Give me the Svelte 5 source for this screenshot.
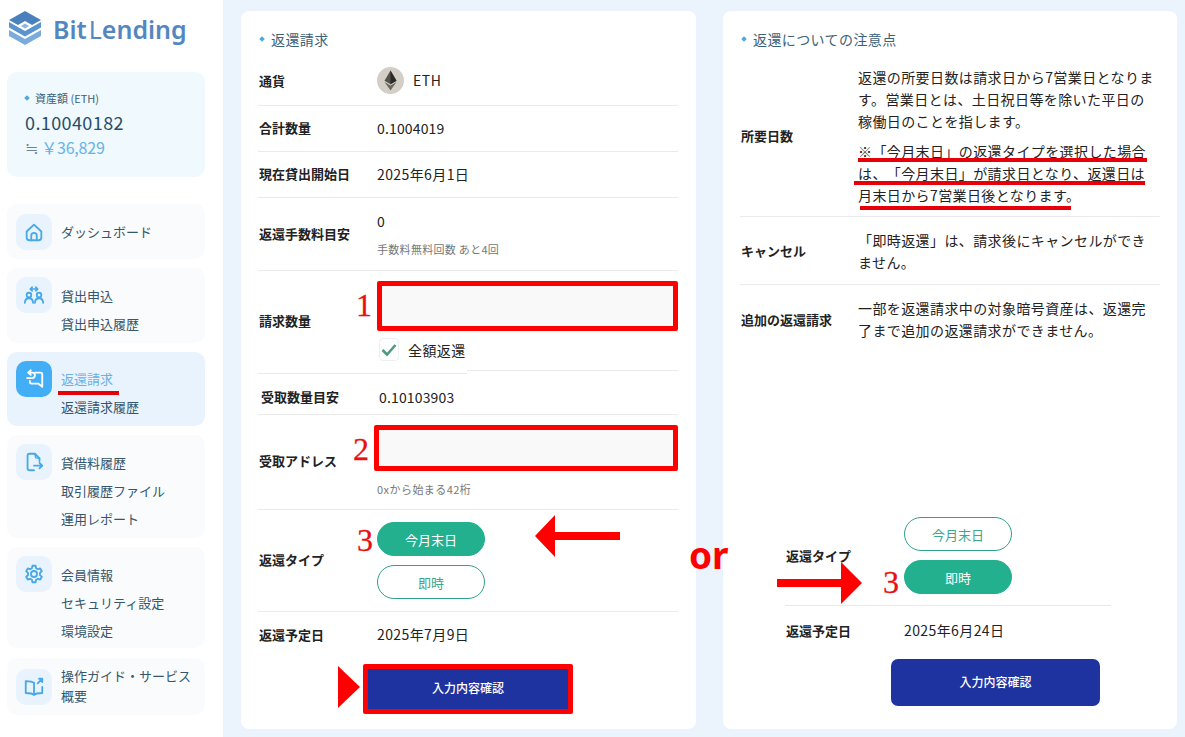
<script>
  const groups = [
    { icon: 'home', links: ['ダッシュボード'], cls: 'g1' },
    { icon: 'people', links: ['貸出申込', '貸出申込履歴'], cls: 'g2' },
    { icon: 'swap', links: ['返還請求', '返還請求履歴'], cls: 'g2b', active: true },
    { icon: 'file', links: ['貸借料履歴', '取引履歴ファイル', '運用レポート'], cls: 'g3' },
    { icon: 'gear', links: ['会員情報', 'セキュリティ設定', '環境設定'], cls: 'g3b' },
    { icon: 'book', links: ['操作ガイド・サービス概要'], cls: 'g4' }
  ];
</script>

{#snippet navIcon(name)}
  <svg viewBox="0 0 24 24" width="22" height="22" fill="none" stroke="currentColor" stroke-width="2" stroke-linecap="round" stroke-linejoin="round">
    {#if name === 'home'}
      <path d="M4 11.500 12 4l8 7.500V18a3 3 0 0 1-3 3H7a3 3 0 0 1-3-3z" />
      <path d="M9 21v-5a3 3 0 0 1 6 0v5" />
    {:else if name === 'people'}
      <circle cx="6.500" cy="12" r="2.500" />
      <circle cx="17.500" cy="12" r="2.500" />
      <path d="M2 20.500c.2-3 2-5 4.500-5s4.300 2 4.500 5M13 20.500c.2-3 2-5 4.500-5s4.300 2 4.500 5" />
      <path d="M8 5.500h8M10 3.500 8 5.500 10 7.500M14 3.500 16 5.500 14 7.500" stroke-width="1.800" />
    {:else if name === 'swap'}
      <path d="M13 5h6a2 2 0 0 1 2 2v13.500L16.500 17H9.500a2 2 0 0 1-2-2v-1" />
      <path d="M6 5h4a3 3 0 0 1 0 6H4.500M8.500 2.500 5.500 5l3 2.500" />
    {:else if name === 'file'}
      <path d="M12 21H7a2 2 0 0 1-2-2V5a2 2 0 0 1 2-2h6l5 5v3" />
      <path d="M13 3.500 14 7.500l4 .5" stroke-width="1.600" />
      <path d="M12 16h9M18 13l3 3-3 3" />
    {:else if name === 'gear'}
      <circle cx="12" cy="12" r="3.300" />
      <path d="M10.300 3h3.400l.6 2.700 1.900 1.100 2.600-.8 1.700 3-2 1.800v2.400l2 1.800-1.700 3-2.600-.8-1.900 1.100-.6 2.700h-3.400l-.6-2.700-1.900-1.100-2.600.8-1.700-3 2-1.800v-2.400l-2-1.800 1.700-3 2.600.8 1.900-1.100z" />
    {:else}
      <path d="M12 7.500C10.500 6 8 5.500 3 5.500v13c5 0 7.500.5 9 2 1.500-1.500 4-2 9-2V12" />
      <path d="M12 7.500v13" />
      <path d="M16 8l5-5M17.500 3H21v3.500" />
    {/if}
  </svg>
{/snippet}

<div class="page">
  <aside class="sidebar">
    <div class="logo">
      <svg width="34" height="34" viewBox="0 0 34 34">
        <path d="M17 0 33 9l-9 5-7-4-7 4-9-5z" fill="#4a80bd" />
        <path d="M1 11l16 9 16-9v5.500L17 25.500 1 16.500z" fill="#5b93cf" />
        <path d="M1 19l16 9 16-9v6L17 34 1 25z" fill="#79abdd" />
        <path d="M17 12.500l4 2.500-4 2.500-4-2.500z" fill="#8ab8e3" />
      </svg>
      <span class="brand">Bit<b>L</b>ending</span>
    </div>

    <div class="balance">
      <div class="bal-label"><i class="dot"></i>資産額 (ETH)</div>
      <div class="bal-value">0.10040182</div>
      <div class="bal-yen"><span>≒</span> ￥36,829</div>
    </div>

    <nav>
      {#each groups as g}
        <div class="group {g.cls}" class:active={g.active}>
          <div class="icon">{@render navIcon(g.icon)}</div>
          <div class="links">
            {#each g.links as l, i}
              <a class:cur={g.active && i === 0}>{l}</a>
            {/each}
          </div>
        </div>
      {/each}
    </nav>
  </aside>

  <main>
    <section class="card left">
      <h2><i class="dot"></i>返還請求</h2>
      <div class="row h49">
        <div class="lab">通貨</div>
        <div class="val coin">
          <svg width="27" height="27" viewBox="0 0 27 27">
            <circle cx="13.500" cy="13.500" r="13.500" fill="#d3cfc6" />
            <path d="M13.500 3.500 7.500 13.700l6 3.500 6-3.500z" fill="#55524e" />
            <path d="M13.500 3.500v13.700l6-3.500z" fill="#2c2a29" />
            <path d="M7.500 15l6 8.500 6-8.500-6 3.500z" fill="#6c6965" />
          </svg>
          ETH
        </div>
      </div>
      <div class="row h46"><div class="lab">合計数量</div><div class="val num-val">0.1004019</div></div>
      <div class="row h46"><div class="lab">現在貸出開始日</div><div class="val">2025年6月1日</div></div>
      <div class="row h73">
        <div class="lab">返還手数料目安</div>
        <div class="val stack"><span>0</span><small>手数料無料回数 あと4回</small></div>
      </div>
      <div class="row h100 top">
        <div class="lab mid">請求数量</div>
        <div class="val">
          <div class="input one"></div>
          <label class="check">
            <span class="box">
              <svg width="16" height="14" viewBox="0 0 16 14"><path d="M1.500 7 6 11.500 14.500 2" fill="none" stroke="#4f9c7d" stroke-width="2.600" /></svg>
            </span>
            全額返還
          </label>
        </div>
      </div>
      <div class="row h44 shifted"><div class="lab">受取数量目安</div><div class="val num-val">0.10103903</div></div>
      <div class="row h95 top">
        <div class="lab mid2">受取アドレス</div>
        <div class="val">
          <div class="input two"></div>
          <small class="hint">0xから始まる42桁</small>
        </div>
      </div>
      <div class="row h102">
        <div class="lab">返還タイプ</div>
        <div class="val pills">
          <button class="pill on">今月末日</button>
          <button class="pill">即時</button>
        </div>
      </div>
      <div class="row plain h50"><div class="lab">返還予定日</div><div class="val">2025年7月9日</div></div>
      <button class="confirm marked">入力内容確認</button>
    </section>

    <section class="card right">
      <h2><i class="dot"></i>返還についての注意点</h2>
      <div class="row r1">
        <div class="lab">所要日数</div>
        <div class="val para">
          <p>返還の所要日数は請求日から7営業日となります。営業日とは、土日祝日等を除いた平日の稼働日のことを指します。</p>
          <p class="second">※「今月末日」の返還タイプを選択した場合は、「今月末日」が請求日となり、返還日は月末日から7営業日後となります。</p>
        </div>
      </div>
      <div class="row r2">
        <div class="lab">キャンセル</div>
        <div class="val para"><p>「即時返還」は、請求後にキャンセルができません。</p></div>
      </div>
      <div class="row r3 plain">
        <div class="lab">追加の返還請求</div>
        <div class="val para"><p>一部を返還請求中の対象暗号資産は、返還完了まで追加の返還請求ができません。</p></div>
      </div>

      <div class="alt">
        <div class="row alt-type">
          <div class="lab">返還タイプ</div>
          <div class="val pills">
            <button class="pill">今月末日</button>
            <button class="pill on">即時</button>
          </div>
        </div>
        <div class="row plain alt-date"><div class="lab">返還予定日</div><div class="val">2025年6月24日</div></div>
      </div>
      <button class="confirm alt-btn">入力内容確認</button>
    </section>
  </main>

  <!-- annotations and paste seams drawn over the screenshot -->
  <div class="marks">
    <i class="seam"></i>
    <span class="num" style="left:356px;top:287px">1</span>
    <span class="num" style="left:353px;top:431px">2</span>
    <span class="num" style="left:357px;top:522px">3</span>
    <span class="num" style="left:883px;top:564px">3</span>
    <span class="or">or</span>
    <i class="ul" style="left:58px;top:391px;width:61px"></i>
    <i class="ul" style="left:858px;top:158px;width:289px"></i>
    <i class="ul" style="left:854px;top:181px;width:291px"></i>
    <i class="ul" style="left:860px;top:206px;width:211px"></i>
    <svg class="arrows" width="1185" height="737" viewBox="0 0 1185 737">
      <path d="M620 532v8h-65v17l-20-21 20-21v17z" fill="#f00" />
      <path d="M777 579v8h64v17l21-21-21-21v17z" fill="#f00" />
      <path d="M338 666l22 21-22 21z" fill="#f00" />
    </svg>
  </div>
</div>

<style>
  :global(body) {
    margin: 0;
    font-family: "Noto Sans CJK JP", "Noto Sans", sans-serif;
    color: #222;
  }
  .page {
    position: relative;
    width: 1185px;
    height: 737px;
    display: flex;
    overflow: hidden;
    background: #ebf3fd;
  }
  .sidebar {
    width: 223px;
    flex: none;
    background: #fff;
    padding: 11px 18px 0 7px;
    box-sizing: border-box;
  }
  .logo {
    display: flex;
    align-items: flex-start;
    gap: 11px;
    height: 36px;
    padding-left: 1px;
  }
  .brand {
    font-family: "Noto Sans", sans-serif;
    font-size: 25px;
    font-weight: 600;
    color: #5487bf;
    line-height: 36px;
  }
  .brand b {
    font-weight: 400;
    margin-left: 2px;
  }
  .balance {
    margin-top: 25px;
    height: 105px;
    box-sizing: border-box;
    background: #eff9fe;
    border-radius: 10px;
    padding: 17px 18px;
  }
  .bal-label {
    font-size: 11px;
    line-height: 18px;
    color: #3b5f78;
    display: flex;
    align-items: center;
  }
  .dot {
    display: inline-block;
    width: 4px;
    height: 4px;
    background: #4fa9dd;
    transform: rotate(45deg);
    margin-right: 6px;
  }
  .bal-value {
    font-size: 18px;
    line-height: 26px;
    letter-spacing: .4px;
    color: #274d69;
    margin-top: 2px;
  }
  .bal-yen {
    font-size: 16px;
    line-height: 24px;
    color: #67b3e6;
    letter-spacing: -.2px;
  }
  .bal-yen span {
    color: #6d8291;
  }
  nav {
    margin-top: 27px;
    display: flex;
    flex-direction: column;
    gap: 9px;
  }
  .group {
    display: flex;
    gap: 9px;
    background: #fafbfd;
    border-radius: 10px;
    padding: 9px 9px;
    box-sizing: border-box;
  }
  .group.active {
    background: #e9f3fd;
  }
  .g1 { height: 55px; align-items: center; }
  .g2 { height: 75px; }
  .g2b { height: 74px; }
  .g3 { height: 103px; }
  .g3b { height: 101px; }
  .g4 { height: 57px; align-items: center; margin-top: 1px; }
  .icon {
    width: 36px;
    height: 36px;
    flex: none;
    border-radius: 10px;
    background: #e9f3fd;
    color: #47a9e6;
    display: flex;
    align-items: center;
    justify-content: center;
  }
  .active .icon {
    background: #42aef5;
    color: #fff;
  }
  .links {
    display: flex;
    flex-direction: column;
    padding-top: 5px;
    color: #35566c;
    font-size: 13px;
    line-height: 28px;
  }
  .g2b .links { padding-top: 4px; }
  .g1 .links, .g4 .links {
    padding-top: 0;
  }
  .g4 .links { line-height: 20px; padding-bottom: 1px; }
  .cur {
    color: #6cb1e6;
  }
  main {
    flex: 1;
    display: flex;
    gap: 27px;
    padding: 11px 8px 8px 18px;
  }
  .card {
    background: #fff;
    border-radius: 8px;
    box-sizing: border-box;
    display: flex;
    flex-direction: column;
  }
  .left { width: 455px; padding: 0 18px 0 17px; }
  .right { width: 454px; padding: 0 17px 0 17px; }
  h2 {
    margin: 0;
    height: 46px;
    box-sizing: border-box;
    padding-top: 9px;
    font-size: 14px;
    line-height: 20px;
    font-weight: 400;
    letter-spacing: .4px;
    color: #3c6179;
    display: flex;
    align-items: center;
    flex: none;
  }
  h2 .dot { margin: 0 7px 0 2px; }
  .row {
    display: grid;
    grid-template-columns: 119px 1fr;
    align-items: center;
    border-bottom: 1px solid #e9e9e9;
    box-sizing: border-box;
    flex: none;
  }
  .plain { border-bottom: 0; }
  .h49 { height: 49px; padding-bottom: 2px; }
  .h46 { height: 46px; padding-bottom: 2px; }
  .h73 { height: 73px; }
  .h73 .lab, .h102 .lab { margin-bottom: 2px; }
  .h100 { height: 100px; }
  .h44 { height: 44px; }
  .h95 { height: 95px; }
  .h102 { height: 102px; }
  .h50 { height: 50px; padding-bottom: 6px; }
  .top { align-items: start; }
  .lab {
    font-size: 13px;
    font-weight: 700;
    color: #222;
    padding-left: 1px;
  }
  .mid { padding-top: 40px; }
  .mid2 { padding-top: 36px; }
  .val {
    font-size: 14px;
    letter-spacing: .4px;
    color: #222;
  }
  .num-val { letter-spacing: .15px; }
  .coin {
    display: flex;
    align-items: center;
    gap: 9px;
    letter-spacing: .6px;
  }
  .stack {
    display: flex;
    flex-direction: column;
    gap: 10px;
    line-height: 20px;
  }
  small {
    font-size: 11px;
    line-height: 16px;
    color: #777;
    letter-spacing: .3px;
  }
  .input {
    background: #f9f9f9;
    box-sizing: border-box;
    border: 5px solid #f00;
    border-radius: 2px;
  }
  .input.one { height: 50px; margin-top: 10px; }
  .input.two { height: 46px; margin-top: 10px; margin-left: -3px; }
  .check {
    display: flex;
    align-items: center;
    gap: 9px;
    margin-top: 7px;
    margin-left: 2px;
    height: 23px;
    font-size: 14px;
  }
  .box {
    width: 20px;
    height: 23px;
    box-sizing: border-box;
    border: 1px solid #eee;
    border-radius: 4px;
    display: flex;
    align-items: center;
    justify-content: center;
  }
  .shifted { padding: 8px 0 0 2px; }
  .hint { display: block; margin-top: 10px; letter-spacing: .45px; }
  .pills {
    display: flex;
    flex-direction: column;
    gap: 9px;
    align-items: flex-start;
  }
  .pill {
    width: 108px;
    height: 34px;
    border-radius: 17px;
    border: 1px solid #2fa08c;
    background: #fff;
    color: #3ba78f;
    font: 400 13px "Noto Sans CJK JP", sans-serif;
    padding: 0;
  }
  .pill.on {
    background: #22b08f;
    border-color: #22b08f;
    color: #fff;
  }
  .confirm {
    width: 209px;
    height: 47px;
    border: 0;
    border-radius: 7px;
    background: #1f33a0;
    color: #fff;
    font: 500 12px "Noto Sans CJK JP", sans-serif;
    padding: 0 0 2px;
    flex: none;
  }
  .marked {
    width: 210px;
    height: 50px;
    box-sizing: border-box;
    border: 5px solid #f00;
    border-radius: 2px;
    margin: 2px 0 0 105px;
    padding-bottom: 4px;
  }
  .para { padding-right: 4px; text-spacing-trim: space-all; }
  .para p {
    margin: 0;
    line-height: 22px;
  }
  .para .second { margin-top: 8px; }
  .r1, .r2, .r3 { grid-template-columns: 118px 1fr; }
  .r1 { height: 160px; padding-bottom: 2px; }
  .r2 { height: 68px; }
  .r3 { height: 72px; padding-bottom: 4px; }
  .alt {
    margin: auto 0 0 45px;
    width: 326px;
  }
  .alt-type { height: 100px; }
  .alt-date { height: 52px; padding-bottom: 6px; margin-top: 1px; }
  .alt-btn { margin: 0 0 23px 151px; }
  .marks {
    position: absolute;
    inset: 0;
    pointer-events: none;
  }
  .seam {
    position: absolute;
    left: 258px;
    top: 370px;
    width: 209px;
    height: 4px;
    box-sizing: border-box;
    background: #fff;
    border-bottom: 1px solid #e9e9e9;
  }
  .arrows { position: absolute; left: 0; top: 0; }
  .num {
    position: absolute;
    font-family: "Liberation Serif", serif;
    font-size: 32px;
    line-height: 36px;
    color: #e81010;
    -webkit-text-stroke: .3px #e81010;
  }
  .or {
    position: absolute;
    left: 689px;
    top: 530px;
    font: 700 37px/50px "Noto Sans", sans-serif;
    color: #f00;
  }
  .ul {
    position: absolute;
    height: 4px;
    background: #e6000a;
  }
</style>
